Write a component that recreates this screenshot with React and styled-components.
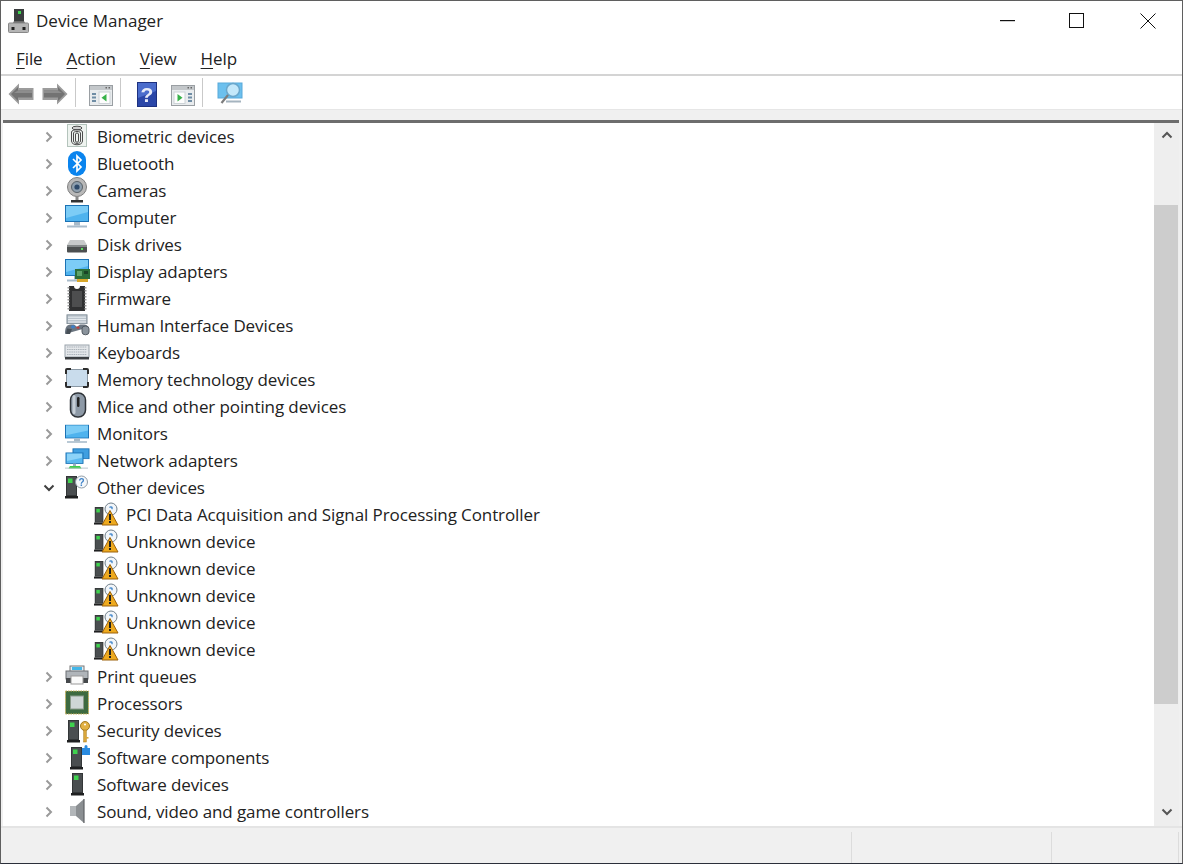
import React from "react";
import styled, { createGlobalStyle } from "styled-components";

const Global = createGlobalStyle`
  html, body { margin: 0; padding: 0; background: #fff; }
  body { font-family: "Open Sans", "Noto Sans", "Liberation Sans", sans-serif; color: #1f1f1f; }
`;

const Win = styled.div`
  width: 1183px; height: 864px; box-sizing: border-box; overflow: hidden;
  border: 1px solid #5f5f5f; border-bottom: 1px solid #2b2f3a;
  display: flex; flex-direction: column; background: #fff;
`;
const TitleBar = styled.div`
  height: 43px; flex: none; display: flex; align-items: center; padding-left: 7px;
`;
const TitleText = styled.div`
  font-size: 17px; margin-left: 7px; flex: 1; color: #222; position: relative; top: -2px;
`;
const Controls = styled.div`
  display: flex; align-items: center; height: 100%; margin-right: -1px;
`;
const Ctl = styled.div`
  width: ${p => p.$w || 71}px; height: 100%; display: flex; align-items: center; justify-content: center; position: relative; top: -2px;
`;
const MenuBar = styled.div`
  height: 30px; flex: none; display: flex; align-items: center; padding-left: 3px;
  border-bottom: 2px solid #d4d4d4;
`;
const MenuItem = styled.div`
  font-size: 17px; padding: 0 12px; color: #222; letter-spacing: -0.1px; position: relative; top: -1px;
  u { text-underline-offset: 3px; text-decoration-thickness: 1px; }
`;
const Toolbar = styled.div`
  height: 33px; flex: none; display: flex; align-items: center; padding-left: 7px; background: #fff;
`;
const ToolBtn = styled.div`
  display: flex; align-items: center; justify-content: center; padding-top: 3px;
  width: ${p => p.$w || 26}px; margin-right: ${p => p.$mr || 0}px;
`;
const Sep = styled.div`
  width: 1px; height: 29px; background: #c9c9c9; margin: 0 ${p => p.$r || 14}px 0 ${p => p.$l || 7}px;
`;
const Strip = styled.div`
  height: 11px; flex: none; background: #f0f0f0; border-top: 1px solid #e6e6e6; box-sizing: border-box;
`;
const Body = styled.div`
  flex: 1; min-height: 0; display: flex; padding: 0 3px 0 2px; background: #f0f0f0;
`;
const Tree = styled.div`
  flex: 1; min-width: 0; background: #fff; border-top: 3px solid #6d6d6d; box-sizing: border-box;
`;
const Row = styled.div`
  height: 27px; display: flex; align-items: center; padding-left: ${p => p.$child ? 90 : 38}px;
`;
const Chevron = styled.div`
  width: 16px; height: 27px; flex: none; display: flex; align-items: center; justify-content: center; margin-right: 7px;
`;
const Label = styled.div`
  font-size: 17px; margin-left: 7px; color: #222; white-space: nowrap; letter-spacing: -0.1px; position: relative; top: -0.5px;
`;
const Scroll = styled.div`
  width: 25px; flex: none; background: #eeeeee; border-top: 3px solid #6d6d6d; box-sizing: border-box; display: flex; flex-direction: column;
`;
const ScrollBtn = styled.div`
  height: ${p => p.$h}px; flex: none; display: flex; align-items: center; justify-content: center;
`;
const ScrollArrow = styled.svg`
  margin-top: ${p => p.$mt || 0}px; margin-bottom: ${p => p.$mb || 0}px;
`;
const Thumb = styled.div`
  height: 499px; flex: none; background: #cdcdcd; margin-right: 1px;
`;
const StatusBar = styled.div`
  height: 37px; flex: none; display: flex; background: #f0f0f0; border-top: 2px solid #e4e4e4; box-sizing: border-box; padding-top: 4px;
`;
const StatusCell = styled.div`
  width: ${p => p.$w}px; flex: none; border-right: 1px solid #dcdcdc; box-sizing: border-box;
`;
const IconSvg = styled.svg`
  display: block; flex: none; overflow: visible; filter: blur(0.3px);
`;
const AppSvg = styled(IconSvg)`
  margin-top: -4px; margin-left: 0;
`;

const Svg = ({ w = 26, h = 27, children }) => (
  <IconSvg width={w} height={h} viewBox={`0 0 ${w} ${h}`}>{children}</IconSvg>
);

const Tower = ({ x = 0, y = 0, s = 1 }) => (
  <g transform={`translate(${x} ${y}) scale(${s})`}>
    <rect x="1" y="0" width="11" height="20" fill="#333637" />
    <rect x="2" y="1" width="9" height="18" fill="#4a4e50" />
    <rect x="3" y="2.500" width="4.500" height="4.500" fill="#3fd24e" />
    <rect x="0" y="20" width="13" height="2.500" fill="#1f2021" />
  </g>
);

const Monitor = ({ y = 0, s = 1 }) => (
  <g transform={`translate(0 ${y}) scale(1 ${s})`}>
    <rect x="1" y="1" width="24" height="17" fill="#1c72b4" />
    <rect x="2" y="2" width="22" height="15" fill="#4fb3ee" />
    <path d="M2 2h22v6L2 14z" fill="#7cccf6" />
    <rect x="10" y="18" width="6" height="3.500" fill="#a8bac8" />
    <rect x="3" y="21.500" width="20" height="2" fill="#a9bccb" />
  </g>
);

const Warn = () => (
  <g>
    <circle cx="18" cy="8" r="6" fill="#f2f6fa" stroke="#6f7e89" />
    <path d="M16.500 6.500c1.500-1.500 3.500 0 2.200 1.600" fill="none" stroke="#3d83c9" strokeWidth="1.300" />
    <path d="M17 9.500 25 24H9Z" fill="#eeaa1f" stroke="#9c620c" />
    <rect x="16" y="13" width="2" height="6" fill="#222" />
    <rect x="16" y="20" width="2" height="2" fill="#222" />
  </g>
);

const icons = {
  bio: (
    <Svg>
      <rect x="3.500" y="1.500" width="19" height="22" fill="#eef3ef" stroke="#b4c4bc" />
      <g fill="none" stroke="#4c4c4c" strokeWidth="1">
        <ellipse cx="13" cy="5" rx="5" ry="1.800" fill="#cfcfcf" />
        <path d="M7.500 9c0-3 11-3 11 0v9c0 5-11 5-11 0z" />
        <path d="M9.500 10c0-2 7-2 7 0v8c0 3.200-7 3.200-7 0z" />
        <path d="M11.500 11c0-1.300 3-1.300 3 0v7c0 1.600-3 1.600-3 0z" />
      </g>
    </Svg>
  ),
  bt: (
    <Svg>
      <rect x="4" y="1" width="18" height="25" rx="9" fill="#0a84ee" />
      <path d="M9 9l8 8-4 4V6l4 4-8 8" fill="none" stroke="#fff" strokeWidth="1.700" />
    </Svg>
  ),
  cam: (
    <Svg>
      <circle cx="13" cy="10" r="9.500" fill="#b8b8b8" stroke="#7f7f7f" />
      <circle cx="13" cy="10" r="5.500" fill="#8e9fae" stroke="#5a6268" />
      <circle cx="13" cy="10" r="2.600" fill="#2e4a6a" />
      <rect x="11.500" y="19" width="3" height="4" fill="#8a8a8a" />
      <rect x="7" y="23" width="12" height="2.500" fill="#333" />
    </Svg>
  ),
  comp: <Svg><Monitor /></Svg>,
  disk: (
    <Svg>
      <path d="M6 9h14l3 5H3z" fill="#c7c9ca" />
      <rect x="3" y="14" width="20" height="7.500" rx="1" fill="#4c4f50" />
      <rect x="3" y="14" width="20" height="2" fill="#85898a" />
      <rect x="17" y="17" width="2" height="2" fill="#5fdc5f" />
    </Svg>
  ),
  display: (
    <Svg>
      <Monitor />
      <rect x="11" y="11" width="15" height="10" fill="#2c6e38" />
      <rect x="13" y="13" width="5" height="5" fill="#5ea36a" />
      <rect x="20" y="13" width="4" height="3" fill="#1b4426" />
      <rect x="13" y="21" width="11" height="3" fill="#d9a82b" />
    </Svg>
  ),
  fw: (
    <Svg>
      <path d="M5 1h5a3 3 0 0 0 6 0h5v25H5z" fill="#2f3031" />
      <rect x="8" y="6" width="10" height="16" fill="#4d4e4f" />
      <g fill="#999">
        {[2,5,8,11,14,17,20,23].map(y => <rect key={"l" + y} x="3.500" y={y} width="2" height="1.500" />)}
        {[2,5,8,11,14,17,20,23].map(y => <rect key={"r" + y} x="20.500" y={y} width="2" height="1.500" />)}
      </g>
    </Svg>
  ),
  hid: (
    <Svg>
      <g transform="translate(0 2) scale(1 .8)">
        <rect x="3" y="1" width="20" height="11" fill="#b9c2cb" stroke="#7f8b95" />
        <path d="M4 4h18M4 7h18M4 10h18" stroke="#eef2f5" />
        <path d="M1 25c0-7 1-12 6-12h3l3 3 3-3h4c2 0 4 1 4 4" fill="#6b7580" />
        <path d="M2 25h4l2-6-5-1z" fill="#474f57" />
        <circle cx="9" cy="16" r="2" fill="#3c7fc9" />
        <circle cx="14" cy="17" r="1.500" fill="#c43c3c" />
        <rect x="18" y="15" width="7" height="11" rx="3.500" fill="#8a939c" stroke="#4a5159" />
      </g>
    </Svg>
  ),
  kbd: (
    <Svg>
      <rect x="1" y="6" width="24" height="12" fill="#e4e7ea" stroke="#9aa3ab" />
      {[8,10.500,13,15.500].map(y => <path key={y} d={`M3 ${y}h20`} stroke="#aab2b9" strokeWidth="1.200" strokeDasharray="1.500 .7" />)}
      <rect x="1" y="18" width="24" height="2.500" fill="#3c3f42" />
    </Svg>
  ),
  mem: (
    <Svg>
      <rect x="2" y="3" width="22" height="18" rx="1" fill="#c9dcec" />
      <path d="M2 8V4a1 1 0 0 1 1-1h4M19 3h4a1 1 0 0 1 1 1v4M24 16v4a1 1 0 0 1-1 1h-4M7 21H3a1 1 0 0 1-1-1v-4" fill="none" stroke="#2d2d2d" strokeWidth="2" />
      <path d="M7 3.500h12M7 20.500h12M2.500 8v8M23.500 8v8" stroke="#8a98a4" />
    </Svg>
  ),
  mouse: (
    <Svg>
      <rect x="6.500" y="0" width="15" height="24" rx="7" fill="#8d99a6" stroke="#2f3338" strokeWidth="1.500" />
      <rect x="8.500" y="2" width="3" height="19" rx="1.500" fill="#c6ced6" />
      <rect x="13" y="4" width="2.500" height="10" rx="1.200" fill="#222" />
    </Svg>
  ),
  mon: <Svg><Monitor y={4} s={0.8} /></Svg>,
  net: (
    <Svg>
      <g transform="translate(0 1) scale(1 .82)">
        <rect x="9" y="1" width="16" height="12" fill="#3f9fe0" stroke="#1c72b4" />
        <rect x="2" y="6" width="17" height="13" fill="#5ab9f0" stroke="#1c72b4" />
        <path d="M3 7h15v5L3 16z" fill="#8cd3f8" />
        <rect x="9" y="19" width="3" height="3" fill="#9cb0c0" />
        <path d="M6 22h10l1.500 3h-13z" fill="#3ecf4a" />
        <rect x="1" y="24" width="23" height="1" fill="#aab8c2" />
      </g>
    </Svg>
  ),
  other: (
    <Svg>
      <Tower x={1} y={2} />
      <circle cx="17.500" cy="8" r="6" fill="#f4f7fa" stroke="#8f9ba5" />
      <text x="17.500" y="11.500" fontSize="10" fontWeight="700" fontFamily="Liberation Sans, sans-serif" fill="#3f83c8" textAnchor="middle">?</text>
    </Svg>
  ),
  warn: (
    <Svg>
      <Tower x={1} y={6} s={0.78} />
      <Warn />
    </Svg>
  ),
  print: (
    <Svg>
      <rect x="6" y="3" width="14" height="6" fill="#e6eef3" stroke="#777" />
      <path d="M8 4h10v3H8z" fill="#43b6e8" />
      <rect x="2" y="8" width="22" height="8" fill="#b0b5ba" stroke="#6c7074" />
      <rect x="2" y="15" width="22" height="5" fill="#45484b" />
      <rect x="7" y="13" width="12" height="8" fill="#fafafa" stroke="#999" />
    </Svg>
  ),
  cpu: (
    <Svg>
      <rect x="1.500" y="1" width="23" height="23" fill="#3f6b3f" stroke="#c9b15a" strokeDasharray="1.500 1" />
      <rect x="3" y="2.500" width="20" height="20" fill="#3d6a40" />
      <rect x="6.500" y="6" width="13" height="13" fill="#cfd6d6" stroke="#8a9a8a" />
    </Svg>
  ),
  sec: (
    <Svg>
      <Tower x={3} y={3} />
      <circle cx="21" cy="9" r="4.500" fill="#e2b143" stroke="#a37a1f" />
      <rect x="19.700" y="13" width="2.600" height="12" fill="#d9a63a" stroke="#a37a1f" strokeWidth=".5" />
      <rect x="22" y="20" width="2.500" height="1.600" fill="#d9a63a" />
      <circle cx="21" cy="7.500" r="1" fill="#fff" />
    </Svg>
  ),
  swc: (
    <Svg>
      <Tower x={6} y={3} />
      <path d="M18 4h2.500V2.500a1.500 1.500 0 0 1 3 0V4H26v7h-8z" fill="#2a8be0" />
    </Svg>
  ),
  swd: <Svg><Tower x={7} y={2} /></Svg>,
  sound: (
    <Svg>
      <rect x="6" y="8" width="6" height="10" fill="#b2b6b9" />
      <path d="M12 8l8-7v24l-8-7z" fill="#8b8f92" />
      <path d="M20 1v24" stroke="#5f6265" strokeWidth="1.200" />
    </Svg>
  ),
};

const rows = [
  ["bio", "Biometric devices"], ["bt", "Bluetooth"], ["cam", "Cameras"], ["comp", "Computer"],
  ["disk", "Disk drives"], ["display", "Display adapters"], ["fw", "Firmware"], ["hid", "Human Interface Devices"],
  ["kbd", "Keyboards"], ["mem", "Memory technology devices"], ["mouse", "Mice and other pointing devices"],
  ["mon", "Monitors"], ["net", "Network adapters"], ["other", "Other devices", "open"],
  ["warn", "PCI Data Acquisition and Signal Processing Controller", "child"],
  ["warn", "Unknown device", "child"], ["warn", "Unknown device", "child"], ["warn", "Unknown device", "child"],
  ["warn", "Unknown device", "child"], ["warn", "Unknown device", "child"],
  ["print", "Print queues"], ["cpu", "Processors"], ["sec", "Security devices"],
  ["swc", "Software components"], ["swd", "Software devices"], ["sound", "Sound, video and game controllers"],
];

const ChevRight = () => (
  <svg width="8" height="12" viewBox="0 0 8 12"><path d="M1.500 1.500 6 6l-4.500 4.500" fill="none" stroke="#9a9a9a" strokeWidth="2" /></svg>
);
const ChevDown = () => (
  <svg width="12" height="8" viewBox="0 0 12 8"><path d="M1.500 1.500 6 6l4.500-4.500" fill="none" stroke="#404040" strokeWidth="2" /></svg>
);

const Arrow = ({ flip }) => (
  <IconSvg width="26" height="24" viewBox="0 0 26 24">
    <g transform={flip ? "translate(26 0) scale(-1 1)" : undefined}>
      <path d="M.5 12 11 1.500V6h14.500v12H11v4.500z" fill="#9c9c9c" />
      <path d="M3 12 10 5v3.500h14v7H10V19z" fill="#737373" />
      <path d="M10 8.500h14v2.500H6z" fill="#8d8d8d" />
    </g>
  </IconSvg>
);
const Pane = ({ mirrored }) => (
  <IconSvg width="26" height="24" viewBox="0 0 26 24">
    <rect x="1.500" y="3.500" width="23" height="20" fill="#e9ecee" stroke="#9a9fa3" />
    <rect x="2" y="4" width="22" height="4" fill="#c3c7ca" />
    <rect x="17.500" y="5" width="1.500" height="1.500" fill="#666" /><rect x="20.500" y="5" width="1.500" height="1.500" fill="#666" />
    {mirrored ? (
      <>
        <rect x="4" y="10" width="11" height="11.500" fill="#fdfdfd" stroke="#ccd2d6" />
        <path d="M7.500 12 12.500 15.700 7.500 19.500z" fill="#38b24a" />
        <path d="M18 12h4M18 15.500h4M18 19h4" stroke="#6f8da5" strokeWidth="2" />
      </>
    ) : (
      <>
        <path d="M4 12h4M4 15.500h4M4 19h4" stroke="#6f8da5" strokeWidth="2" />
        <rect x="11" y="10" width="11" height="11.500" fill="#fdfdfd" stroke="#ccd2d6" />
        <path d="M18.500 12 13.500 15.700 18.500 19.500z" fill="#38b24a" />
      </>
    )}
  </IconSvg>
);
const Help = () => (
  <IconSvg width="20" height="25" viewBox="0 0 20 25">
    <rect x=".5" y=".5" width="19" height="24" fill="#2a46a8" stroke="#1d3180" />
    <path d="M1 1h18v8L1 16z" fill="#4a6ccc" />
    <text x="10" y="20" textAnchor="middle" fontSize="21" fontWeight="700" fontFamily="Liberation Sans, sans-serif" fill="#e8ecf8">?</text>
  </IconSvg>
);
const Scan = () => (
  <IconSvg width="26" height="24" viewBox="0 0 26 24">
    <rect x="1" y="1" width="24" height="15" fill="#6cc0ee" stroke="#58a9da" />
    <circle cx="16" cy="8" r="6.500" fill="#c4e8fa" stroke="#6aa7cc" strokeWidth="1.500" />
    <path d="M11 13 4.500 21" stroke="#7d7d7d" strokeWidth="2.200" />
    <rect x="9" y="18.500" width="15" height="2" fill="#a5b4bf" />
  </IconSvg>
);

const AppIcon = () => (
  <AppSvg width="21" height="24" viewBox="0 0 21 24">
    <rect x="6" y="0" width="10" height="12" fill="#3a3d3e" />
    <rect x="10" y="2" width="3" height="3" fill="#3fd24e" />
    <path d="M6 12h10l1 2H5z" fill="#6c6c6c" />
    <rect x=".5" y="14" width="20" height="9.500" rx="1" fill="#b5b5b5" stroke="#888" />
    <rect x="3.500" y="18" width="3" height="3" fill="#222" /><rect x="14.500" y="18" width="3" height="3" fill="#222" />
  </AppSvg>
);

export default function App() {
  return (
    <>
      <Global />
      <Win>
        <TitleBar>
          <AppIcon />
          <TitleText>Device Manager</TitleText>
          <Controls>
            <Ctl $w={67}>
              <svg width="15" height="2" viewBox="0 0 15 2"><rect width="15" height="1.200" fill="#111" /></svg>
            </Ctl>
            <Ctl>
              <svg width="15" height="15" viewBox="0 0 15 15"><rect x=".5" y=".5" width="14" height="14" fill="none" stroke="#111" /></svg>
            </Ctl>
            <Ctl>
              <svg width="16" height="16" viewBox="0 0 16 16"><path d="M.5.500l15 15M15.500.500l-15 15" fill="none" stroke="#111" /></svg>
            </Ctl>
          </Controls>
        </TitleBar>
        <MenuBar>
          <MenuItem><u>F</u>ile</MenuItem>
          <MenuItem><u>A</u>ction</MenuItem>
          <MenuItem><u>V</u>iew</MenuItem>
          <MenuItem><u>H</u>elp</MenuItem>
        </MenuBar>
        <Toolbar>
          <ToolBtn $mr={8}><Arrow /></ToolBtn>
          <ToolBtn><Arrow flip /></ToolBtn>
          <Sep $r={12} />
          <ToolBtn><Pane /></ToolBtn>
          <Sep $l={6} $r={16} />
          <ToolBtn $w={20} $mr={13}><Help /></ToolBtn>
          <ToolBtn><Pane mirrored /></ToolBtn>
          <Sep $l={6} />
          <ToolBtn><Scan /></ToolBtn>
        </Toolbar>
        <Strip />
        <Body>
          <Tree>
            {rows.map(([ic, text, kind], i) => (
              <Row key={i} $child={kind === "child"}>
                {kind !== "child" && <Chevron>{kind === "open" ? <ChevDown /> : <ChevRight />}</Chevron>}
                {icons[ic]}
                <Label>{text}</Label>
              </Row>
            ))}
          </Tree>
          <Scroll>
            <ScrollBtn $h={82}>
              <ScrollArrow width="12" height="8" viewBox="0 0 12 8" $mb={58}><path d="M1.500 6.500 6 2l4.500 4.500" fill="none" stroke="#555" strokeWidth="2" /></ScrollArrow>
            </ScrollBtn>
            <Thumb />
            <ScrollBtn $h={122}>
              <ScrollArrow width="12" height="8" viewBox="0 0 12 8" $mt={94}><path d="M1.500 1.500 6 6l4.500-4.500" fill="none" stroke="#555" strokeWidth="2" /></ScrollArrow>
            </ScrollBtn>
          </Scroll>
        </Body>
        <StatusBar>
          <StatusCell $w={851} />
          <StatusCell $w={200} />
          <StatusCell $w={127} />
        </StatusBar>
      </Win>
    </>
  );
}
